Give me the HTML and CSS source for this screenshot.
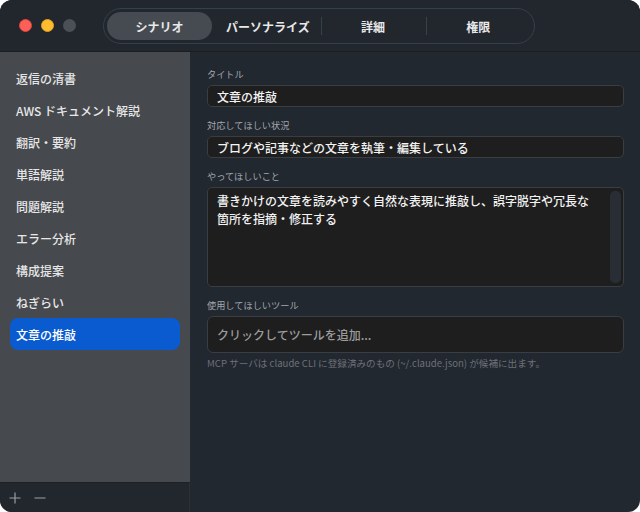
FILE: index.html
```html
<!DOCTYPE html>
<html lang="ja">
<head>
    <meta charset="UTF-8">
    <meta name="viewport" content="width=device-width, initial-scale=1.0">
    <title>シナリオ</title>
    <link rel="stylesheet" href="styles.css">
</head>
<body>

    <div class="window">
        <div class="titlebar">
            <div class="lights">
                <span class="light red"></span>
                <span class="light yellow"></span>
                <span class="light gray"></span>
            </div>
            <div class="segmented">
                <div class="segment selected">シナリオ</div>
                <div class="segment">パーソナライズ</div>
                <div class="segment sep">詳細</div>
                <div class="segment sep">権限</div>
            </div>
        </div>

        <div class="content">
            <div class="sidebar">
                <div class="scenario-list">
                    <div class="scenario">返信の清書</div>
                    <div class="scenario">AWS ドキュメント解説</div>
                    <div class="scenario">翻訳・要約</div>
                    <div class="scenario">単語解説</div>
                    <div class="scenario">問題解説</div>
                    <div class="scenario">エラー分析</div>
                    <div class="scenario">構成提案</div>
                    <div class="scenario">ねぎらい</div>
                    <div class="scenario active">文章の推敲</div>
                </div>
                <div class="sidebar-foot">
                    <svg width="12" height="12" viewBox="0 0 12 12"><path d="M6 0.5V11.5M0.5 6H11.5" stroke="#9a9ea4" stroke-width="1.2"/></svg>
                    <svg width="12" height="12" viewBox="0 0 12 12"><path d="M0.5 6H11.5" stroke="#9a9ea4" stroke-width="1.2"/></svg>
                </div>
            </div>

            <div class="main">
                <div class="field-group">
                    <div class="label">タイトル</div>
                    <div class="field">文章の推敲</div>
                </div>
                <div class="field-group">
                    <div class="label">対応してほしい状況</div>
                    <div class="field">ブログや記事などの文章を執筆・編集している</div>
                </div>
                <div class="field-group">
                    <div class="label">やってほしいこと</div>
                    <div class="textarea">
                        <div class="textarea-text">書きかけの文章を読みやすく自然な表現に推敲し、誤字脱字や冗長な箇所を指摘・修正する</div>
                        <div class="scroll-track"></div>
                    </div>
                </div>
                <div class="field-group">
                    <div class="label">使用してほしいツール</div>
                    <div class="tool-field">クリックしてツールを追加...</div>
                    <div class="hint">MCP サーバは claude CLI に登録済みのもの (~/.claude.json) が候補に出ます。</div>
                </div>
            </div>
        </div>
    </div>

</body>
</html>
```

FILE: styles.css
```css
body {
    margin: 0;
    padding: 0;
    background: #ffffff;
    font-family: "Noto Sans CJK JP", "Noto Sans", sans-serif;
}
.window {
    width: 640px;
    height: 512px;
    border-radius: 12px;
    overflow: hidden;
    background-color: #222830;
    display: flex;
    flex-direction: column;
}
.titlebar {
    height: 52px;
    flex-shrink: 0;
    display: flex;
    align-items: center;
    background-color: #22272e;
    border-bottom: 1px solid #1a1e23;
    box-sizing: border-box;
    padding-left: 19px;
}
.lights {
    display: flex;
    gap: 9px;
    margin-right: 27px;
}
.light {
    width: 13px;
    height: 13px;
    border-radius: 50%;
    box-sizing: border-box;
}
.light.red {
    background-color: #fe5f57;
    border: 1px solid #e0443e;
}
.light.yellow {
    background-color: #febc2e;
    border: 1px solid #dea123;
}
.light.gray {
    background-color: #4b5057;
}
.segmented {
    width: 432px;
    height: 36px;
    box-sizing: border-box;
    border: 1px solid #33414d;
    border-radius: 18px;
    padding: 3px;
    display: flex;
    margin-top: 1px;
}
.segment {
    flex: 1;
    display: flex;
    align-items: center;
    justify-content: center;
    color: #e8e9ea;
    font-size: 12px;
    font-weight: 700;
    position: relative;
}
.segment.selected {
    background-color: #464b52;
    border-radius: 14px;
    margin-right: 3px;
}
.segment.sep::before {
    content: "";
    position: absolute;
    left: 0;
    top: 5px;
    bottom: 5px;
    width: 1px;
    background-color: #37414b;
}
.content {
    flex: 1;
    display: flex;
    min-height: 0;
}
.sidebar {
    width: 190px;
    flex-shrink: 0;
    display: flex;
    flex-direction: column;
}
.scenario-list {
    flex: 1;
    background-color: #46494d;
    padding: 10px 10px 0;
}
.scenario {
    height: 32px;
    display: flex;
    align-items: center;
    padding-left: 6px;
    color: #e6e7e8;
    font-size: 12px;
    font-weight: 500;
    border-radius: 8px;
}
.scenario.active {
    background-color: #0a5bd0;
    color: #ffffff;
}
.sidebar-foot {
    height: 30px;
    flex-shrink: 0;
    background-color: #22272e;
    border-top: 1px solid #1d2126;
    border-right: 1px solid #2b3037;
    box-sizing: border-box;
    display: flex;
    align-items: center;
    gap: 13px;
    padding-left: 9px;
}
.main {
    flex: 1;
    padding: 16px 16px 0 17px;
}
.field-group {
    margin-bottom: 12px;
}
.label {
    font-size: 9.2px;
    line-height: 12px;
    height: 12px;
    color: #a3a7ac;
    margin-bottom: 5px;
}
.field {
    height: 22px;
    box-sizing: border-box;
    background-color: #1e1e1e;
    border: 1px solid #3a3e43;
    border-radius: 5px;
    padding-left: 9px;
    display: flex;
    align-items: center;
    color: #f2f2f2;
    font-size: 12px;
    font-weight: 500;
}
.textarea {
    height: 100px;
    box-sizing: border-box;
    background-color: #1e1e1e;
    border: 1px solid #3a3e43;
    border-radius: 5px;
    display: flex;
}
.textarea-text {
    width: 378px;
    padding: 4px 0 0 9px;
    color: #f2f2f2;
    font-size: 12px;
    font-weight: 500;
    line-height: 18px;
}
.scroll-track {
    margin: 3px 2px 3px auto;
    width: 11px;
    border-radius: 5px;
    background-color: #292e34;
}
.tool-field {
    height: 37px;
    box-sizing: border-box;
    background-color: #1e1e1e;
    border: 1px solid #3a3e43;
    border-radius: 6px;
    padding-left: 9px;
    display: flex;
    align-items: center;
    color: #9c9c9c;
    font-size: 12px;
    font-weight: 500;
}
.hint {
    margin-top: 4px;
    font-size: 9.6px;
    line-height: 12px;
    color: #6c7177;
}
```
